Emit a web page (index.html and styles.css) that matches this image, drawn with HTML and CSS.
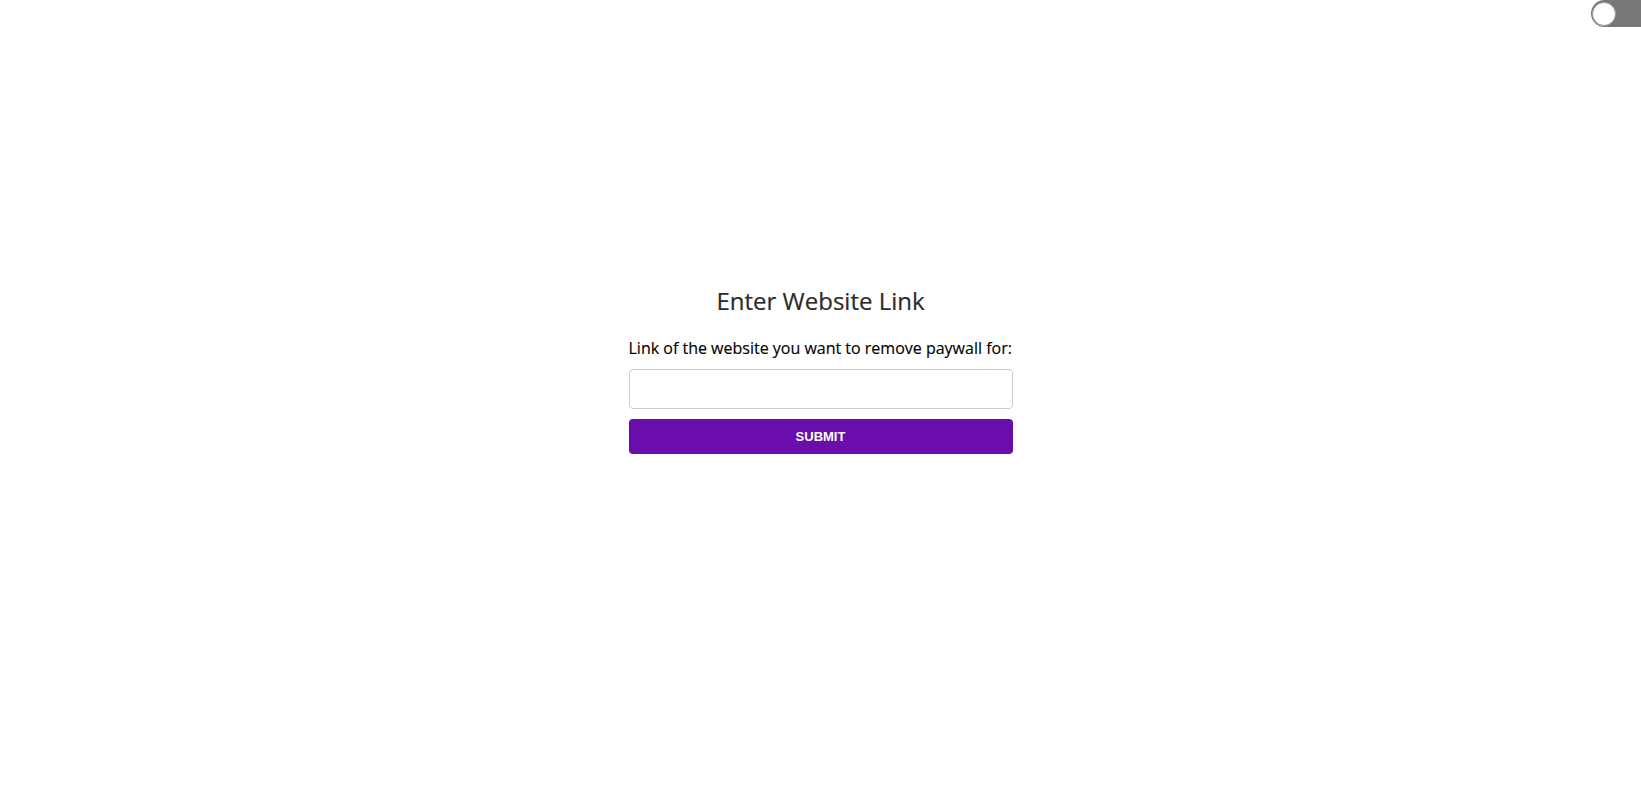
FILE: index.html
```html
<!DOCTYPE html>
<html lang="en">
<head>
<meta charset="utf-8">
<title>Remove Paywall</title>
<link rel="stylesheet" href="styles.css">
</head>
<body>
<label class="switch" aria-label="Toggle dark mode">
  <span class="knob"></span>
</label>
<main class="page">
  <form class="card">
    <h1 class="title">Enter Website Link</h1>
    <label class="field-label" for="url">Link of the website you want to remove paywall for:</label>
    <input class="field-input" id="url" type="text">
    <button class="submit" type="button">SUBMIT</button>
  </form>
</main>
</body>
</html>
```
FILE: styles.css
```css
html, body {
  margin: 0;
  padding: 0;
  background: #fff;
  overflow: hidden;
}
body {
  font-family: "Open Sans", "Noto Sans", sans-serif;
  width: 1641px;
  height: 804px;
  position: relative;
}
.switch {
  position: absolute;
  top: 0;
  right: -12px;
  width: 62px;
  height: 27px;
  border-radius: 14px;
  background: #777;
  display: block;
}
.knob {
  position: absolute;
  left: 1px;
  top: 2px;
  width: 22px;
  height: 22px;
  border-radius: 50%;
  background: #fff;
  border: 1px solid #999;
}
.page {
  display: flex;
  justify-content: center;
  padding-top: 284px;
}
.card {
  width: 384px;
  display: flex;
  flex-direction: column;
  margin: 0;
}
.title {
  margin: 0 0 20px;
  font-size: 24px;
  font-weight: 400;
  line-height: normal;
  color: #2b2b2b;
  text-align: center;
  -webkit-text-stroke: 0.2px #2b2b2b;
}
.field-label {
  font-size: 16px;
  line-height: normal;
  color: #000;
  margin-bottom: 10px;
  -webkit-text-stroke: 0.15px #000;
}
.field-input {
  box-sizing: border-box;
  height: 40px;
  width: 100%;
  border: 1px solid #ccc;
  border-radius: 4px;
  padding: 0 10px;
  font-size: 16px;
  margin: 0 0 10px;
  background: #fff;
}
.submit {
  box-sizing: border-box;
  height: 35px;
  width: 100%;
  border: none;
  border-radius: 4px;
  background: #6a0dad;
  color: #fff;
  font-family: "Liberation Sans", Arial, sans-serif;
  font-weight: 700;
  font-size: 13px;
  margin: 0;
  padding: 0;
}
```
